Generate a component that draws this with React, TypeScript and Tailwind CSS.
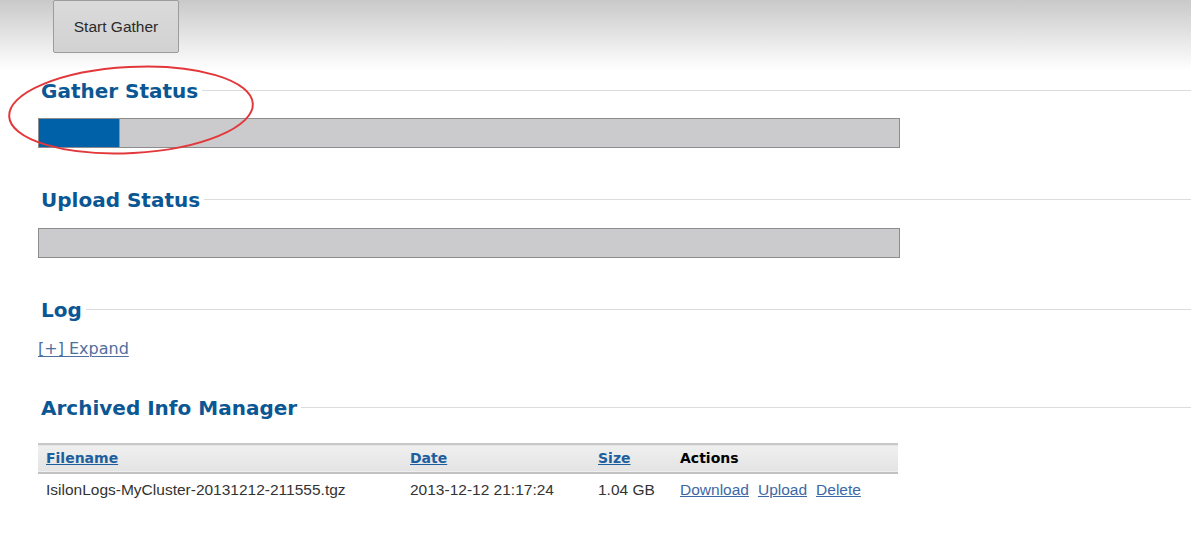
import type { ReactNode } from "react";

const headingFont = { fontFamily: '"DejaVu Sans", Verdana, sans-serif' };

type ArchiveFile = {
  name: string;
  date: string;
  size: string;
};

const archives: ArchiveFile[] = [
  {
    name: "IsilonLogs-MyCluster-20131212-211555.tgz",
    date: "2013-12-12 21:17:24",
    size: "1.04 GB",
  },
];

function SectionTitle({ title }: { title: string }) {
  return (
    <div className="flex items-start">
      <h2
        className="ml-[3px] text-[20px] leading-[24px] font-bold text-[#0b5794]"
        style={headingFont}
      >
        {title}
      </h2>
      <div className="ml-1 mt-[11px] h-px flex-1 bg-[#dcdcdc]" />
    </div>
  );
}

function ProgressBar({ percent }: { percent: number }) {
  return (
    <div className="h-[30px] w-[862px] border border-[#8c8c8c] bg-[#cbcacc]">
      {percent > 0 && (
        <div
          className="h-full border-r border-[#7e98b4] bg-[#0060a8]"
          style={{ width: `${percent}%` }}
        />
      )}
    </div>
  );
}

function Section({ title, className, children }: { title: string; className: string; children?: ReactNode }) {
  return (
    <section className={className}>
      <SectionTitle title={title} />
      {children}
    </section>
  );
}

export default function App() {
  return (
    <div
      className="relative min-h-[545px] overflow-hidden bg-white text-[#333]"
      style={{ fontFamily: '"Liberation Sans", Tahoma, Arial, sans-serif' }}
    >
      {/* toolbar band */}
      <div className="h-[70px] bg-linear-to-b from-[#c9c9c9] to-white">
        <button className="ml-[53px] h-[53px] w-[126px] rounded-[2px] border border-[#9c9c9c] bg-linear-to-b from-[#dadada] to-[#d2d2d2] text-[15.5px] text-[#2a2a2a]">
          Start Gather
        </button>
      </div>

      <div className="pl-[38px]">
        <Section title="Gather Status" className="mt-[9px]">
          <div className="mt-[15px]">
            <ProgressBar percent={9.4} />
          </div>
        </Section>

        <Section title="Upload Status" className="mt-[40px]">
          <div className="mt-[16px]">
            <ProgressBar percent={0} />
          </div>
        </Section>

        <Section title="Log" className="mt-[40px]">
          <div className="mt-[17px] leading-[20px]">
            <a
              href="#"
              className="text-[16px] text-[#4f6f9f] underline decoration-1 underline-offset-2"
              style={headingFont}
            >
              [+] Expand
            </a>
          </div>
        </Section>

        <Section title="Archived Info Manager" className="mt-[37px]">
          <table className="mt-[23px] w-[860px] table-fixed border-collapse text-left">
            <colgroup>
              <col className="w-[364px]" />
              <col className="w-[188px]" />
              <col className="w-[82px]" />
              <col />
            </colgroup>
            <thead>
              <tr
                className="h-[29px] border-t-2 border-b-2 border-t-[#c8c8c8] border-b-[#c2c2c2] bg-linear-to-b from-[#efefef] to-[#e4e4e4] text-[14px] font-bold"
                style={headingFont}
              >
                <th className="pl-2 font-bold">
                  <a href="#" className="text-[#1d5f9e] underline">Filename</a>
                </th>
                <th className="pl-2 font-bold">
                  <a href="#" className="text-[#1d5f9e] underline">Date</a>
                </th>
                <th className="pl-2 font-bold">
                  <a href="#" className="text-[#1d5f9e] underline">Size</a>
                </th>
                <th className="pl-2 font-bold text-black">Actions</th>
              </tr>
            </thead>
            <tbody>
              {archives.map((file) => (
                <tr key={file.name} className="h-[33px] text-[15.5px]">
                  <td className="pl-2">{file.name}</td>
                  <td className="pl-2">{file.date}</td>
                  <td className="pl-2">{file.size}</td>
                  <td className="pl-2">
                    <div className="flex gap-[9px] text-[#3d68a6]">
                      <a href="#" className="underline">Download</a>
                      <a href="#" className="underline">Upload</a>
                      <a href="#" className="underline">Delete</a>
                    </div>
                  </td>
                </tr>
              ))}
            </tbody>
          </table>
        </Section>
      </div>

      {/* hand-drawn highlight around the gather progress */}
      <svg
        className="pointer-events-none absolute left-0 top-[60px]"
        width="272"
        height="108"
        viewBox="0 0 272 108"
      >
        <ellipse
          cx="131"
          cy="50"
          rx="122"
          ry="43"
          transform="rotate(-3 131 50)"
          fill="none"
          stroke="#e2383b"
          strokeWidth="2"
        />
      </svg>
    </div>
  );
}
